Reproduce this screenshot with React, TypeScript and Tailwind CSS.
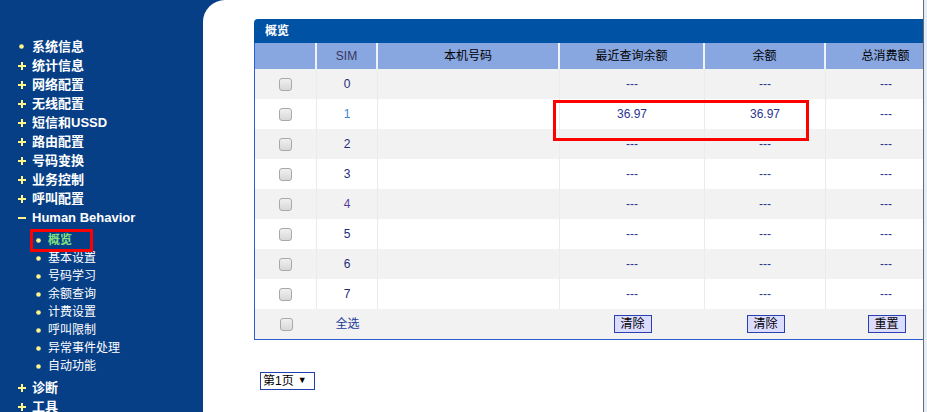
import React from "react";

const FONT = { fontFamily: '"Liberation Sans", "Noto Sans CJK SC", sans-serif' };

function Plus() {
  return (
    <svg width="8" height="8" viewBox="0 0 8 8" className="block">
      <rect x="0" y="3" width="8" height="2" fill="#fff68a" />
      <rect x="3" y="0" width="2" height="8" fill="#fff68a" />
    </svg>
  );
}
function Minus() {
  return (
    <svg width="8" height="8" viewBox="0 0 8 8" className="block">
      <rect x="0" y="3" width="8" height="2" fill="#fff68a" />
    </svg>
  );
}
function Dot() {
  return (
    <svg width="5" height="5" viewBox="0 0 5 5" className="block">
      <circle cx="2.5" cy="2.5" r="2.3" fill="#fff68a" />
    </svg>
  );
}

const top1 = ["统计信息", "网络配置", "无线配置", "短信和USSD", "路由配置", "号码变换", "业务控制", "呼叫配置"];
const subs = ["基本设置", "号码学习", "余额查询", "计费设置", "呼叫限制", "异常事件处理", "自动功能"];

function TopItem({ label, icon }: { label: string; icon: React.ReactNode }) {
  return (
    <div className="flex items-center h-[19px]">
      <span className="w-[14px] flex items-center">{icon}</span>
      <span className="text-[13px] font-bold text-white leading-[19px] whitespace-nowrap">{label}</span>
    </div>
  );
}

function SubItem({ label, active }: { label: string; active?: boolean }) {
  return (
    <div className="flex items-center h-[18px] pl-[18px]">
      <span className="w-[12px] flex items-center"><Dot /></span>
      <span
        className={
          "text-[12px] leading-[18px] whitespace-nowrap " +
          (active ? "font-bold text-[#7fe07f]" : "text-white")
        }
      >
        {label}
      </span>
    </div>
  );
}

function Checkbox() {
  return (
    <span className="block w-[13px] h-[13px] rounded-[3px] border border-[#a9a9a9] bg-gradient-to-b from-[#f0f0f0] to-[#d8d8d8]" />
  );
}

const simColors = ["#1f2b7a", "#3b86d6", "#1f2b7a", "#1f2b7a", "#5a3c9e", "#1f2b7a", "#1f2b7a", "#1f2b7a"];

const cols = "grid grid-cols-[62px_61px_182px_145px_121px_121px]";

function Btn({ label }: { label: string }) {
  return (
    <span className="inline-flex items-center justify-center w-[38px] h-[18px] bg-[#dcdcff] border border-[#2a3fb0] text-[12px] text-black leading-none">
      {label}
    </span>
  );
}

export default function App() {
  return (
    <div className="w-[927px] h-[412px] flex overflow-hidden bg-[#073f87]" style={FONT}>
      <aside className="w-[203px] shrink-0 pt-[37px] pl-[18px] relative">
        <TopItem label="系统信息" icon={<span className="pl-[1px]"><Dot /></span>} />
        {top1.map((t) => (
          <TopItem key={t} label={t} icon={<Plus />} />
        ))}
        <TopItem label="Human Behavior" icon={<Minus />} />
        <div className="mt-[4px]">
          <SubItem label="概览" active />
          {subs.map((s) => (
            <SubItem key={s} label={s} />
          ))}
        </div>
        <div className="mt-[3px]">
          <TopItem label="诊断" icon={<Plus />} />
          <TopItem label="工具" icon={<Plus />} />
        </div>
        <span className="absolute left-[30px] top-[229px] w-[63px] h-[23px] border-[3px] border-[#ff0000]" />
      </aside>

      <main className="flex-1 bg-white rounded-tl-[22px] overflow-hidden relative">
        <div className="ml-[51px] mt-[19px] w-[800px] relative">
          <div className="h-[24px] bg-[#0052a4] rounded-tl-[4px] flex items-center pl-[11px]">
            <span className="text-white font-bold text-[12px]">概览</span>
          </div>
          <div className="border-l border-b border-[#2a5fd0]">
            <div className={cols + " h-[26px] bg-[#88a6e0] text-[12px]"}>
              <div className="border-r-2 border-[#eef2fb]" />
              <div className="border-r-2 border-[#eef2fb] flex items-center justify-center text-[#3a3560]">SIM</div>
              <div className="border-r-2 border-[#eef2fb] flex items-center justify-center text-black">本机号码</div>
              <div className="border-r-2 border-[#eef2fb] flex items-center justify-center text-black">最近查询余额</div>
              <div className="border-r-2 border-[#eef2fb] flex items-center justify-center text-black">余额</div>
              <div className="border-r-2 border-[#eef2fb] flex items-center justify-center text-black">总消费额</div>
            </div>
            {simColors.map((c, i) => {
              const val = i === 1 ? "36.97" : "---";
              return (
                <div key={i} className={cols + " h-[30px] text-[12px] " + (i % 2 === 0 ? "bg-[#f2f2f2]" : "bg-white")}>
                  <div className="border-r border-[#ebebeb] flex items-center justify-center"><Checkbox /></div>
                  <div className="border-r border-[#ebebeb] flex items-center justify-center" style={{ color: c }}>{i}</div>
                  <div className="border-r border-[#ebebeb]" />
                  <div className="border-r border-[#ebebeb] flex items-center justify-center text-[#2b3590]">{val}</div>
                  <div className="border-r border-[#ebebeb] flex items-center justify-center text-[#2b3590]">{val}</div>
                  <div className="border-r border-[#ebebeb] flex items-center justify-center text-[#2b3590]">---</div>
                </div>
              );
            })}
            <div className={cols + " h-[30px] text-[12px] bg-[#f2f2f2]"}>
              <div className="flex items-center justify-center"><Checkbox /></div>
              <div className="flex items-center justify-center text-[#1a3a9a]">全选</div>
              <div />
              <div className="flex items-center justify-center"><Btn label="清除" /></div>
              <div className="flex items-center justify-center"><Btn label="清除" /></div>
              <div className="flex items-center justify-center"><Btn label="重置" /></div>
            </div>
          </div>
          <span className="absolute left-[299px] top-[81px] w-[256px] h-[41px] border-[3px] border-[#ff0000]" />
        </div>
        <div className="ml-[57px] mt-[32px] inline-flex items-center w-[55px] h-[18px] border border-[#2040b0] pl-[2px] text-[12px] text-black">
          <span>第1页</span>
          <span className="ml-[4px] text-[9px]">▼</span>
        </div>
      </main>
      <div className="w-[1px] bg-[#6b6b6b] shrink-0" />
      <div className="w-[3px] bg-[#e4ecf8] shrink-0" />
    </div>
  );
}
